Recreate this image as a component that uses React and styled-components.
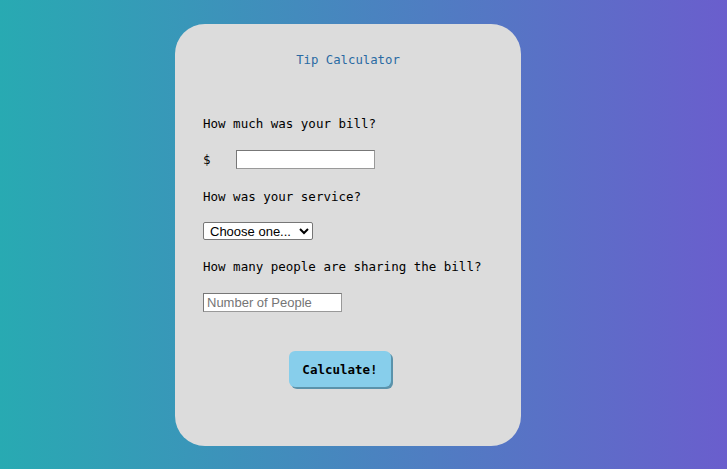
import styled, { createGlobalStyle } from "styled-components"

const Global = createGlobalStyle`
    html, body {
        margin: 0;
        padding: 0;
        height: 100%;
    }
    body {
        background: linear-gradient(to right, #28aab2, #6a5ecd);
        font-family: "DejaVu Sans Mono", monospace;
    }
`

function App() {
    return (
        <>
            <Global />
            <Page>
                <Card>
                    <Title>Tip Calculator</Title>
                    <Question gap={48}>How much was your bill?</Question>
                    <BillRow>
                        <Dollar>$</Dollar>
                        <TextInput type="text" />
                    </BillRow>
                    <Question gap={20}>How was your service?</Question>
                    <Select defaultValue="">
                        <option value="" disabled>Choose one...</option>
                        <option value="0.3">30% - Outstanding</option>
                        <option value="0.2">20% - Good</option>
                        <option value="0.15">15% - It was OK</option>
                        <option value="0.1">10% - Bad</option>
                    </Select>
                    <Question gap={19}>How many people are sharing the bill?</Question>
                    <PeopleInput type="text" placeholder="Number of People" />
                    <Button>Calculate!</Button>
                </Card>
            </Page>
        </>
    )
}

const Page = styled.div`
    padding: 24px 0 0 175px;
`

const Card = styled.div`
    width: 346px;
    height: 422px;
    box-sizing: border-box;
    background: #dcdcdc;
    border-radius: 30px;
    padding: 28px 28px 0;
    display: flex;
    flex-direction: column;
    align-items: flex-start;
`

const Title = styled.h1`
    align-self: stretch;
    margin: 0;
    text-align: center;
    font-size: 12.3px;
    line-height: 16px;
    font-weight: normal;
    color: #2a6aa3;
`

const Question = styled.p`
    margin: ${p => p.gap}px 0 0;
    font-size: 12.5px;
    line-height: 16px;
    color: #000;
`

const BillRow = styled.div`
    display: flex;
    align-items: center;
    margin-top: 18px;
`

const Dollar = styled.span`
    width: 33px;
    font-size: 12.5px;
    line-height: 16px;
`

const TextInput = styled.input`
    width: 139px;
    height: 19px;
    box-sizing: border-box;
    border: 1px solid #999;
    border-top-color: #777;
    border-left-color: #777;
    background: #fff;
    padding: 1px 3px;
    font-family: "Liberation Sans", Arial, sans-serif;
    font-size: 13px;
`

const Select = styled.select`
    margin-top: 17px;
    width: 110px;
    height: 18px;
    box-sizing: border-box;
    border: 1px solid #767676;
    border-radius: 2px;
    background: #fff;
    padding: 0 2px;
    font-family: "Liberation Sans", Arial, sans-serif;
    font-size: 13px;
    color: #000;
`

const PeopleInput = styled(TextInput)`
    margin-top: 18px;
    &::placeholder {
        color: #757575;
    }
`

const Button = styled.button`
    margin: 39px 0 0 86px;
    width: 102px;
    height: 36px;
    background: #87ceeb;
    border: none;
    border-radius: 6px;
    box-shadow: 2px 2px 0 #5b93ab;
    font-family: "DejaVu Sans Mono", monospace;
    font-weight: bold;
    font-size: 12.5px;
    color: #000;
    cursor: pointer;
`

export default App
